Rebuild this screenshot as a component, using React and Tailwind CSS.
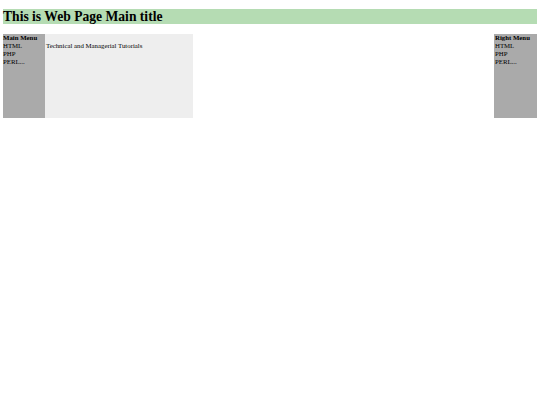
export default function App() {
  const menu = ['HTML', 'PHP', 'PERL...'];

  return (
    <div className="w-[540px] h-[405px] bg-white px-[3px] pt-[9px] text-black" style={{ fontFamily: '"Liberation Serif", serif' }}>
      {/* Titulo */}
      <div className="h-[15px] bg-[#b5dcb3]">
        <h1 className="text-[13.6px] leading-[15px] font-bold">This is Web Page Main title</h1>
      </div>

      {/* Fila con menus y contenido */}
      <div className="mt-[10px] h-[84px] flex text-[6.8px] leading-[8px]">
        <div className="w-[42px] bg-[#aaa]">
          <b>Main Menu</b>
          {menu.map(m => <div key={m}>{m}</div>)}
        </div>
        <div className="w-[148px] bg-[#eee] pt-[8px] pl-[1px]">
          Technical and Managerial Tutorials
        </div>
        <div className="flex-1" />
        <div className="w-[43px] bg-[#aaa] pl-[1px]">
          <b>Right Menu</b>
          {menu.map(m => <div key={m}>{m}</div>)}
        </div>
      </div>
    </div>
  );
}
